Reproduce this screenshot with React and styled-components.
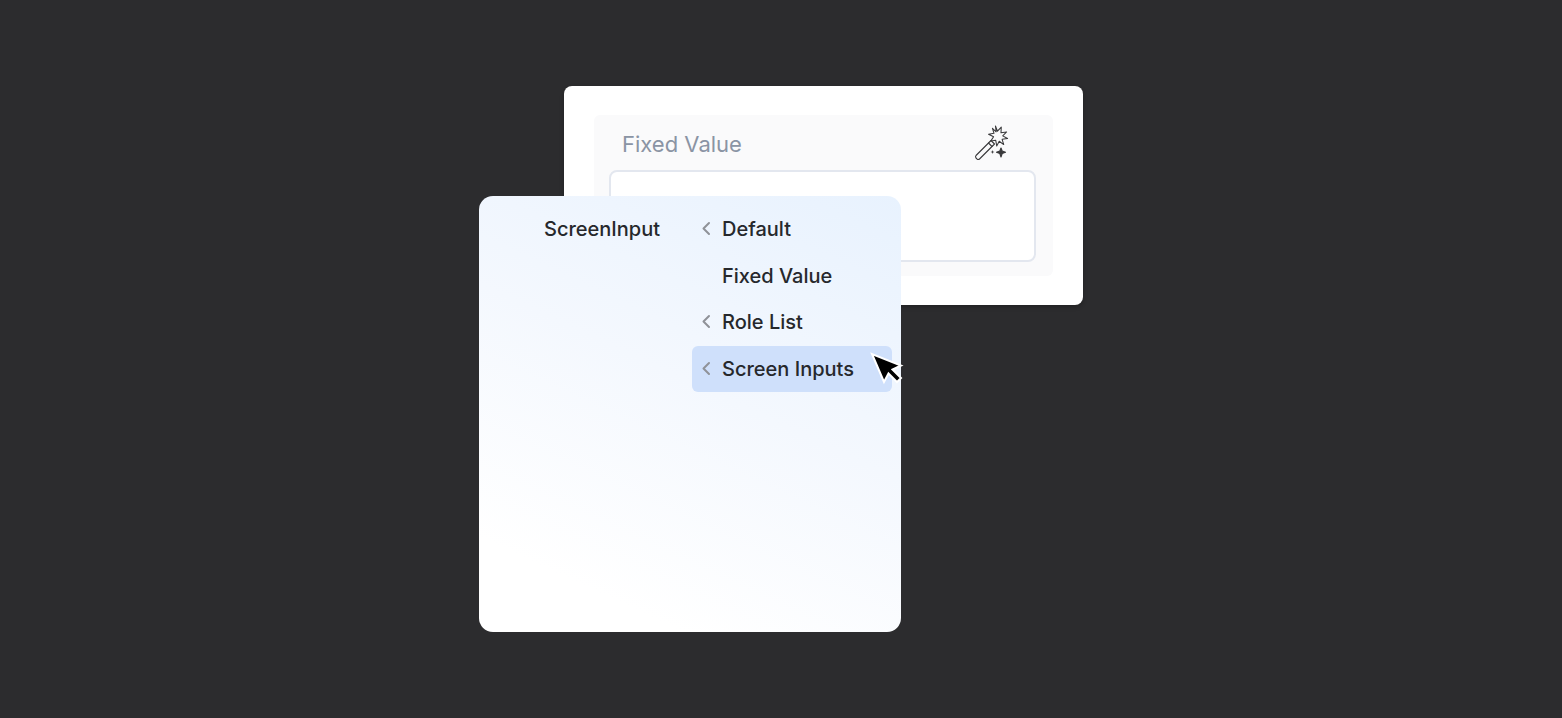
import React from "react";
import styled, { createGlobalStyle } from "styled-components";

const Global = createGlobalStyle`
  html, body { margin: 0; padding: 0; background: #2c2c2e; }
  body { font-family: Inter, "Liberation Sans", sans-serif; }
`;

const Stage = styled.div`
  position: relative;
  width: 1562px;
  height: 718px;
  overflow: hidden;
  background: #2c2c2e;
  padding: 86px 0 0 564px;
  box-sizing: border-box;
`;

const BackCard = styled.section`
  width: 519px;
  height: 219px;
  box-sizing: border-box;
  padding: 29px 30px;
  background: #fff;
  border-radius: 8px;
  box-shadow: 0 2px 4px rgba(0, 0, 0, 0.25);
`;

const InnerPanel = styled.div`
  height: 161px;
  box-sizing: border-box;
  padding: 0 17px 14px 15px;
  background: #fafafb;
  border-radius: 6px;
  display: flex;
  flex-direction: column;
`;

const PanelHeader = styled.div`
  height: 55px;
  flex: none;
  display: flex;
  align-items: center;
  justify-content: space-between;
  padding: 0 26px 0 13px;
  box-sizing: border-box;
`;

const PanelTitle = styled.span`
  font-size: 22px;
  font-weight: 400;
  color: #8a94a4;
  position: relative;
  top: 1px;
`;

const ValueField = styled.div`
  height: 92px;
  box-sizing: border-box;
  background: #fff;
  border: 2px solid #e3e7ef;
  border-radius: 8px;
`;

const Menu = styled.nav`
  position: absolute;
  left: 479px;
  top: 196px;
  width: 422px;
  height: 436px;
  box-sizing: border-box;
  padding: 10px 9px 0 0;
  border-radius: 14px;
  background: linear-gradient(205deg, #e8f2fe 0%, #f4f8fe 45%, #ffffff 85%);
  display: flex;
`;

const RootColumn = styled.div`
  width: 213px;
  padding-left: 65px;
  box-sizing: border-box;
  flex: none;
`;

const RootLabel = styled.div`
  height: 46px;
  display: flex;
  align-items: center;
  font-size: 20px;
  font-weight: 500;
  color: #26282c;
`;

const OptionList = styled.ul`
  list-style: none;
  margin: 0;
  padding: 0;
  width: 200px;
  display: flex;
  flex-direction: column;
  gap: 0.67px;
`;

const Option = styled.li`
  height: 46px;
  display: flex;
  align-items: center;
  box-sizing: border-box;
  padding-left: 30px;
  position: relative;
  border-radius: 6px;
  font-size: 20px;
  font-weight: 500;
  color: #26282c;
  background: ${(p) => (p.$active ? "#cfe0fb" : "transparent")};
`;

const Chevron = styled.svg`
  position: absolute;
  left: 9px;
  top: 50%;
  margin-top: -8px;
  width: 10px;
  height: 15px;
`;

const Cursor = styled.svg`
  position: absolute;
  left: 868px;
  top: 351px;
  width: 38px;
  height: 38px;
`;

const ChevronIcon = () => (
  <Chevron viewBox="0 0 10 15" fill="none">
    <path d="M8 2 L2.5 7.5 L8 13" stroke="#8f9298" strokeWidth="2" strokeLinecap="round" strokeLinejoin="round" />
  </Chevron>
);

const WandIcon = () => (
  <svg width="36" height="36" viewBox="0 0 36 36" fill="none" stroke="#3a3a3c" strokeWidth="1.1" strokeLinejoin="round" strokeLinecap="round">
    <path d="M2 30.5 L17 15.5 L20.5 19 L5.5 34 Q4.5 35 3.2 34.2 L2 33 Q1 31.7 2 30.5 Z" />
    <path d="M14.5 18 L18 21.5" />
    <path d="M21.5 1.5 L23.6 6.8 L27.5 2.6 L27.2 8.4 L33 7.6 L29 11.6 L34 14.4 L28.4 15.2 L30 20.6 L25.4 17.2 L22.8 22 L21.8 16.2 L16.6 17 L19.6 12.6 L14.4 10 L20 9 L18.4 3.8 L22.2 7.4 Z" transform="translate(0.6 -0.4) scale(0.97)" />
    <path d="M27 23 L28.2 26 L31.5 27.3 L28.2 28.6 L27 32 L25.8 28.6 L22.5 27.3 L25.8 26 Z" fill="#3a3a3c" />
    <path d="M18.5 25 L19 26.5 L20.5 27 L19 27.5 L18.5 29 L18 27.5 L16.5 27 L18 26.5 Z" fill="#3a3a3c" stroke="none" />
  </svg>
);

const options = [
  { label: "Default", chevron: true },
  { label: "Fixed Value", chevron: false },
  { label: "Role List", chevron: true },
  { label: "Screen Inputs", chevron: true, active: true },
];

export default function App() {
  return (
    <Stage>
      <Global />
      <BackCard>
        <InnerPanel>
          <PanelHeader>
            <PanelTitle>Fixed Value</PanelTitle>
            <WandIcon />
          </PanelHeader>
          <ValueField />
        </InnerPanel>
      </BackCard>
      <Menu>
        <RootColumn>
          <RootLabel>ScreenInput</RootLabel>
        </RootColumn>
        <OptionList>
          {options.map((o) => (
            <Option key={o.label} $active={o.active}>
              {o.chevron && <ChevronIcon />}
              {o.label}
            </Option>
          ))}
        </OptionList>
      </Menu>
      <Cursor viewBox="0 0 38 38">
        <path
          d="M4 3 L16 31 L20.5 22.5 L29 31 L33 27 L24.5 18.5 L33 14.5 Z"
          fill="#000"
          stroke="#fff"
          strokeWidth="2"
          strokeLinejoin="miter"
        />
      </Cursor>
    </Stage>
  );
}
